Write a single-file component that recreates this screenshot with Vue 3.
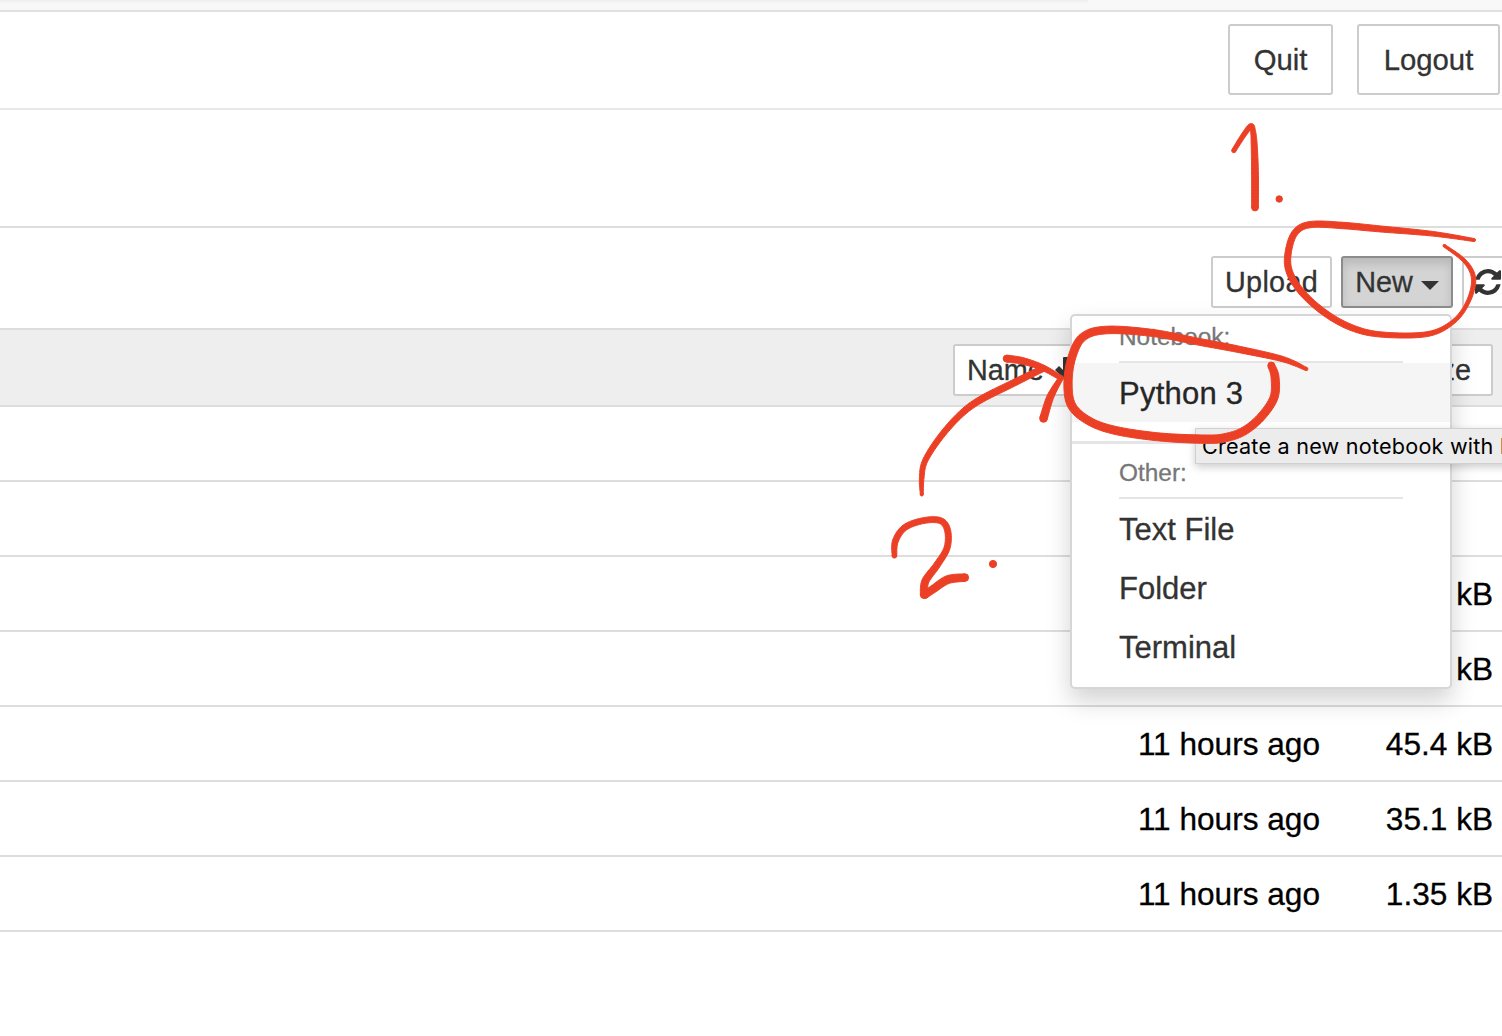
<script setup>
const rows = [
  { modified: '', size: '' },
  { modified: '', size: '' },
  { modified: '', size: 'kB' },
  { modified: '', size: 'kB' },
  { modified: '11 hours ago', size: '45.4 kB' },
  { modified: '11 hours ago', size: '35.1 kB' },
  { modified: '11 hours ago', size: '1.35 kB' },
]
const otherItems = ['Text File', 'Folder', 'Terminal']

// Pen strokes: each point is [x, y, pen width]
const strokes = [
  [[1233.8, 150.6, 4.2], [1242, 137.5, 4.6], [1250.5, 126.3, 5], [1253, 131, 5], [1254.2, 145, 6], [1255, 173, 6.8], [1255, 207.5, 6.8]],
  [[1474, 240, 3], [1433, 233.8, 4.6], [1380, 228.9, 6], [1343, 225.5, 6.4], [1312, 224.4, 6.2], [1297, 230.5, 6.2], [1289.5, 246, 6.2], [1288.3, 268, 6.4], [1300, 290, 6.4], [1323, 311.5, 6.2], [1350, 327, 6], [1380, 334.4, 5.2], [1426.7, 334.2, 4.8], [1453, 322, 4], [1468, 302, 3.8], [1473.6, 279, 4.2], [1465, 261.5, 3.6], [1444.3, 245.7, 2.6]],
  [[1306.3, 369, 3.2], [1283, 359.2, 5.2], [1240, 349.6, 6.4], [1200, 342, 6.8], [1153, 333, 7], [1106.7, 330, 7.6], [1083, 337, 7.8], [1072, 357, 7.8], [1068, 383, 8.2], [1072, 406, 8.2], [1090, 421.5, 7.8], [1116.7, 430.7, 8], [1160, 437, 8], [1206.7, 439.2, 8.4], [1226, 437.5, 8.2], [1244, 431, 8], [1261, 417, 8], [1274, 397.5, 8], [1275, 377, 8], [1271.3, 365.5, 7]],
  [[921.8, 494.5, 3], [921.7, 478, 4.6], [925, 461, 5.2], [940, 437.5, 5.8], [960, 415, 6.2], [980, 400, 6.6], [1013, 383.3, 6.6], [1043, 368.5, 6]],
  [[1006.7, 358.6, 7], [1023, 361, 6.6], [1043, 367.8, 5.6], [1061, 378, 4.6]],
  [[1061, 378, 4.6], [1050.5, 396.5, 6.8], [1043.5, 418.5, 7.6]],
  [[894.4, 555.8, 4.6], [895.4, 541, 5.8], [905, 527.4, 6], [923.5, 520.6, 5.8], [940.5, 520.7, 6], [947.6, 530.5, 6], [947, 548, 6], [937, 565, 6.6], [925.5, 581, 7.2], [923.8, 594.8, 7]],
  [[924.8, 595, 7.2], [934, 588.5, 7.6], [948, 579.6, 8], [964.8, 577.6, 7.6]],
]
const dots = [[1279.2, 199, 3.2], [993, 564, 3.6]]

function spline(a, b, c, d, t) {
  return 0.5 * (2 * b + (c - a) * t + (2 * a - 5 * b + 4 * c - d) * t * t + (3 * b - a - 3 * c + d) * t * t * t)
}

function outline(pts) {
  const samples = []
  const n = pts.length
  for (let i = 0; i < n - 1; i++) {
    const q = [pts[Math.max(i - 1, 0)], pts[i], pts[i + 1], pts[Math.min(i + 2, n - 1)]]
    for (let s = 0; s < 12; s++) {
      samples.push([0, 1, 2].map((k) => spline(q[0][k], q[1][k], q[2][k], q[3][k], s / 12)))
    }
  }
  samples.push(pts[n - 1])
  const left = []
  const right = []
  samples.forEach((p, i) => {
    const a = samples[Math.max(i - 1, 0)]
    const b = samples[Math.min(i + 1, samples.length - 1)]
    const len = Math.hypot(b[0] - a[0], b[1] - a[1]) || 1
    const nx = (-(b[1] - a[1]) / len) * (p[2] / 2)
    const ny = ((b[0] - a[0]) / len) * (p[2] / 2)
    left.push(`${(p[0] + nx).toFixed(2)} ${(p[1] + ny).toFixed(2)}`)
    right.unshift(`${(p[0] - nx).toFixed(2)} ${(p[1] - ny).toFixed(2)}`)
  })
  return 'M' + left.concat(right).join('L') + 'Z'
}

const ink = strokes.map((pts) => ({ d: outline(pts), ends: [pts[0], pts[pts.length - 1]] }))
</script>

<template>
  <div class="page">
    <div class="browser-edge"><div class="edge-shade"></div></div>
    <header class="header">
      <button class="btn large quit">Quit</button>
      <button class="btn large logout">Logout</button>
    </header>
    <div class="tabs"></div>
    <div class="toolbar">
      <button class="btn upload">Upload</button>
      <div class="new-wrap">
        <button class="btn new">New<span class="caret"></span></button>
        <div class="menu">
          <div class="menu-head"><div class="menu-title">Notebook:</div></div>
          <div class="menu-item active">Python 3</div>
          <div class="divider"></div>
          <div class="menu-head"><div class="menu-title">Other:</div></div>
          <div v-for="item in otherItems" :key="item" class="menu-item">{{ item }}</div>
          <div class="tip">Create a new notebook with Python 3</div>
        </div>
      </div>
      <button class="btn refresh">
        <svg width="26" height="26" viewBox="0 0 1536 1536">
          <path fill="#333" d="M1511 928q0 5-1 7-64 268-268 434.500T764 1536q-146 0-282.500-55T238 1324l-129 129q-19 19-45 19t-45-19-19-45V960q0-26 19-45t45-19h448q26 0 45 19t19 45-19 45l-137 137q71 66 161 102t187 36q134 0 250-65t186-179q11-17 53-117 8-23 30-23h192q13 0 22.500 9.500t9.500 22.500zm25-800v448q0 26-19 45t-45 19h-448q-26 0-45-19t-19-45 19-45l138-138Q969 256 768 256q-134 0-250 65T332 500q-11 17-53 117-8 23-30 23H50q-13 0-22.500-9.500T18 608v-7q65-268 270-434.500T768 0q146 0 284 55.500T1297 212l130-129q19-19 45-19t45 19 19 45z" />
        </svg>
      </button>
    </div>
    <div class="list-head">
      <button class="btn name">
        Name
        <svg width="26" height="26" viewBox="0 0 26 26"><path fill="#333" d="M11 1q0-1 1-1h4v13l4-4 4 4-10 11L3 13l4-4 4 4z" /></svg>
      </button>
      <button class="btn size">Size</button>
    </div>
    <div v-for="(row, i) in rows" :key="i" class="row">
      <span class="modified">{{ row.modified }}</span>
      <span class="filesize">{{ row.size }}</span>
    </div>
    <svg class="ink" width="1502" height="1036" viewBox="0 0 1502 1036">
      <g v-for="(s, i) in ink" :key="i">
        <path :d="s.d" />
        <circle v-for="(e, j) in s.ends" :key="j" :cx="e[0]" :cy="e[1]" :r="e[2] / 2" />
      </g>
      <circle v-for="(d, i) in dots" :key="'d' + i" :cx="d[0]" :cy="d[1]" :r="d[2]" />
    </svg>
  </div>
</template>

<style>
body {
  margin: 0;
  background: #fff;
}
</style>

<style scoped>
.page {
  position: relative;
  width: 1502px;
  height: 1036px;
  overflow: hidden;
  background: #fff;
  color: #000;
  font-family: "Liberation Sans", Arial, sans-serif;
  -webkit-text-stroke: 0.3px;
}
.page * {
  box-sizing: border-box;
}
.browser-edge {
  height: 12px;
  background: #f8f8f8;
  border-bottom: 2px solid #e0e0e0;
  overflow: hidden;
}
.edge-shade {
  width: 1088px;
  height: 4px;
  background: linear-gradient(#eeeeee, #f8f8f8);
}
.header {
  display: flex;
  justify-content: flex-end;
  gap: 24px;
  height: 98px;
  padding: 12px 2px 0 0;
  border-bottom: 2px solid #e7e7e7;
}
.btn {
  display: flex;
  flex: none;
  align-items: center;
  justify-content: center;
  height: 52px;
  margin: 0;
  padding: 0;
  border: 2px solid #ccc;
  border-radius: 3px;
  background: #fff;
  color: #333;
  font: 28.8px "Liberation Sans", Arial, sans-serif;
  white-space: nowrap;
}
.large {
  height: 71px;
  font-size: 29.3px;
}
.quit {
  width: 105px;
}
.logout {
  width: 143px;
}
.tabs {
  height: 118px;
  border-bottom: 2px solid #ddd;
}
.toolbar {
  display: flex;
  height: 100px;
  padding: 28px 0 0 1211px;
}
.upload {
  width: 121px;
  margin-right: 9px;
  letter-spacing: 0.3px;
}
.new-wrap {
  position: relative;
  z-index: 2;
  flex: none;
  width: 112px;
  margin-right: 9px;
}
.new {
  width: 112px;
  border-color: #8c8c8c;
  background: #d4d4d4;
  box-shadow: inset 0 6px 10px rgba(0, 0, 0, 0.125);
}
.caret {
  margin: 6px 0 0 8px;
  border-top: 9px solid #333;
  border-left: 9px solid transparent;
  border-right: 9px solid transparent;
}
.refresh {
  width: 52px;
  justify-content: flex-start;
  padding-left: 11px;
}
.refresh svg {
  flex: none;
}
.list-head {
  display: flex;
  justify-content: space-between;
  height: 79px;
  padding: 14px 9px 0 953px;
  border-top: 2px solid #ddd;
  border-bottom: 2px solid #ddd;
  background: #eee;
}
.name {
  width: 136px;
  justify-content: flex-start;
  gap: 8px;
  padding-left: 12px;
}
.name svg {
  flex: none;
}
.size {
  width: 154px;
  justify-content: flex-end;
  padding-right: 20px;
}
.row {
  display: flex;
  align-items: center;
  justify-content: flex-end;
  height: 75px;
  padding: 2px 9px 0 0;
  border-bottom: 2px solid #ddd;
  font-size: 31.6px;
}
.filesize {
  width: 173px;
  text-align: right;
}
.menu {
  position: absolute;
  top: 58px;
  right: 1px;
  width: 382px;
  height: 375px;
  border: 2px solid #d6d6d6;
  border-radius: 5px;
  background: #fff;
  box-shadow: 0 12px 24px rgba(0, 0, 0, 0.175);
}
.menu-head {
  padding: 0 47px;
}
.menu-title {
  height: 47px;
  border-bottom: 2px solid #e5e5e5;
  color: #777;
  font-size: 24.4px;
  line-height: 42px;
}
.menu-item {
  height: 59px;
  padding-left: 47px;
  color: #333;
  font-size: 31px;
  line-height: 62px;
}
.active {
  background: #f5f5f5;
  color: #262626;
  letter-spacing: 0.25px;
}
.divider {
  height: 3px;
  margin: 19px 0 8px;
  background: #e5e5e5;
}
.tip {
  position: absolute;
  left: 123px;
  top: 112px;
  width: 420px;
  height: 36px;
  padding-left: 6px;
  border: 1px solid #d0d0d0;
  background: #ececec;
  box-shadow: 0 3px 8px rgba(0, 0, 0, 0.2);
  color: #000;
  font: 21.6px/35px Inter, sans-serif;
  letter-spacing: 0.22px;
  white-space: nowrap;
  -webkit-text-stroke: 0;
}
.ink {
  position: absolute;
  left: 0;
  top: 0;
  z-index: 3;
  fill: #ec4026;
  stroke: #ec4026;
  stroke-width: 1px;
  pointer-events: none;
}
</style>
